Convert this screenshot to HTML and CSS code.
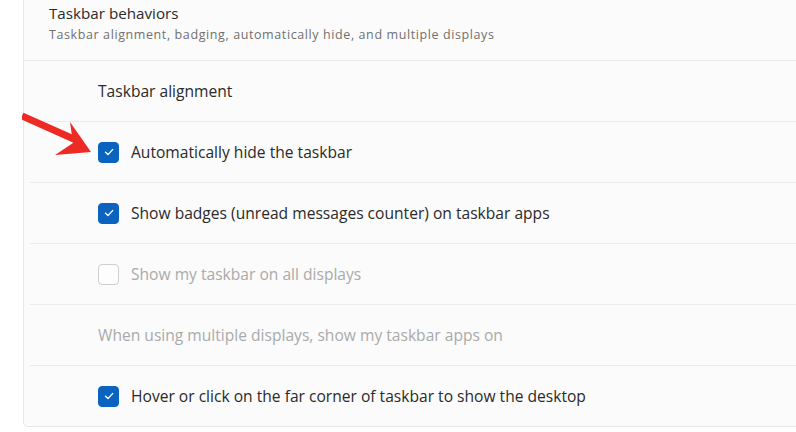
FILE: index.html
```html
<!DOCTYPE html>
<html lang="en">
<head>
    <meta charset="UTF-8">
    <title>Taskbar behaviors</title>
    <link rel="stylesheet" href="styles.css">
</head>
<body>
    <div class="page">
        <div class="card">
            <div class="card-header">
                <div class="card-title">Taskbar behaviors</div>
                <div class="card-subtitle">Taskbar alignment, badging, automatically hide, and multiple displays</div>
            </div>
            <div class="row">
                <span class="label">Taskbar alignment</span>
            </div>
            <div class="row">
                <span class="checkbox checked">
                    <svg viewBox="0 0 12 12" width="12" height="12"><path d="M2.5 6.3 L5 8.6 L9.6 3.6" fill="none" stroke="#fff" stroke-width="1.4" stroke-linecap="round" stroke-linejoin="round"/></svg>
                </span>
                <span class="label">Automatically hide the taskbar</span>
            </div>
            <div class="row">
                <span class="checkbox checked">
                    <svg viewBox="0 0 12 12" width="12" height="12"><path d="M2.5 6.3 L5 8.6 L9.6 3.6" fill="none" stroke="#fff" stroke-width="1.4" stroke-linecap="round" stroke-linejoin="round"/></svg>
                </span>
                <span class="label">Show badges (unread messages counter) on taskbar apps</span>
            </div>
            <div class="row disabled">
                <span class="checkbox"></span>
                <span class="label">Show my taskbar on all displays</span>
            </div>
            <div class="row disabled">
                <span class="label">When using multiple displays, show my taskbar apps on</span>
            </div>
            <div class="row">
                <span class="checkbox checked">
                    <svg viewBox="0 0 12 12" width="12" height="12"><path d="M2.5 6.3 L5 8.6 L9.6 3.6" fill="none" stroke="#fff" stroke-width="1.4" stroke-linecap="round" stroke-linejoin="round"/></svg>
                </span>
                <span class="label">Hover or click on the far corner of taskbar to show the desktop</span>
            </div>
        </div>

        <!-- red annotation arrow -->
        <svg class="arrow" width="100" height="60" viewBox="0 0 100 60">
            <path d="M0 5 L54 29" stroke="#ee2a24" stroke-width="7" stroke-linecap="butt"/>
            <path d="M48 11 L69 41 L33 44 L51 32 Z" fill="#ee2a24"/>
        </svg>
    </div>
</body>
</html>
```

FILE: styles.css
```css
body {
    margin: 0;
    background: #ffffff;
    font-family: "Open Sans", "Noto Sans", sans-serif;
    color: #2a2a2a;
    overflow: hidden;
}

.page {
    position: relative;
    padding-left: 23px;
    height: 432px;
}

.card {
    margin-top: -1px;
    margin-right: -12px;
    background: #fbfbfb;
    border: 1px solid #e6e6e6;
    border-radius: 0 0 5px 5px;
}

.card-header {
    height: 61px;
    box-sizing: border-box;
    padding: 4px 0 0 25px;
    border-bottom: 1px solid #e8e8e8;
}

.card-title {
    font-size: 15.2px;
    line-height: 19px;
}

.card-subtitle {
    margin-top: 4px;
    font-size: 12.5px;
    letter-spacing: 0.6px;
    line-height: 16px;
    color: #707070;
}

.row {
    height: 60px;
    margin-left: 6px;
    padding-left: 68px;
    display: flex;
    align-items: center;
    gap: 12px;
    border-bottom: 1px solid #ebebeb;
}

.row:last-child {
    border-bottom: none;
}

.label {
    font-size: 15.6px;
}

.checkbox {
    width: 21px;
    height: 21px;
    box-sizing: border-box;
    border-radius: 4px;
    border: 1px solid #cfcfcf;
    background: #fdfdfd;
    display: flex;
    align-items: center;
    justify-content: center;
}

.checkbox.checked {
    background: #0a63be;
    border-color: #0a63be;
}

.disabled .label {
    color: #aaaaaa;
}

.arrow {
    position: absolute;
    left: 22px;
    top: 112px;
}
```
